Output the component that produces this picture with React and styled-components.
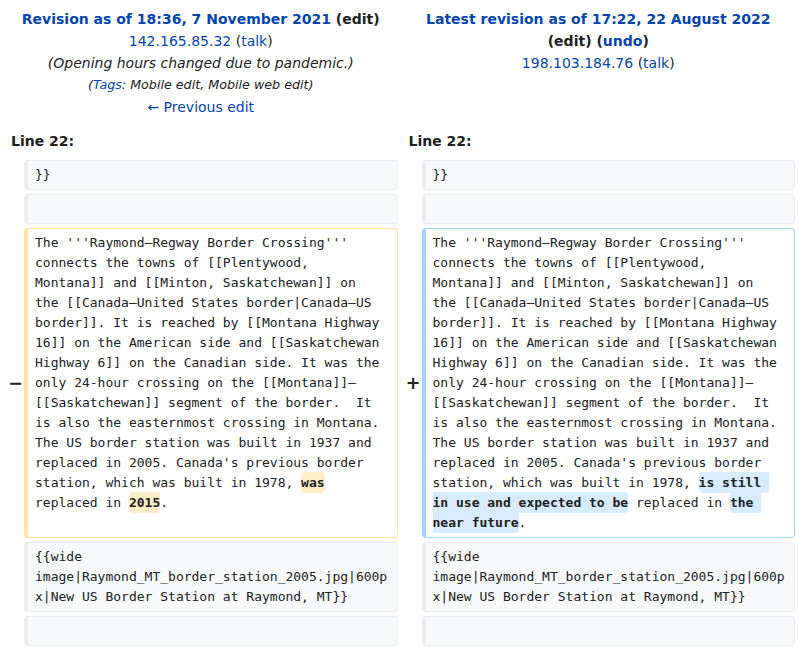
import React from 'react';
import styled, { createGlobalStyle } from 'styled-components';

const GlobalStyle = createGlobalStyle`
    body {
        margin: 0;
        background: #fff;
        color: #202122;
        font-family: "DejaVu Sans", sans-serif;
    }
`

const DiffGrid = styled.div`
    display: grid;
    grid-template-columns: 16px minmax(0, 1fr) 16px minmax(0, 1fr);
    gap: 4px;
    padding: 4px;
`

const Title = styled.div`
    grid-column: span 2;
    text-align: center;
    font-size: 14px;
    line-height: 22px;
    padding: 4px 2px;
`

const Link = styled.a`
    color: #0645ad;
    text-decoration: none;
`

const Heading = styled.strong`
    font-weight: bold;
`

const Comment = styled.div`
    font-style: italic;
`

const Tags = styled.div`
    font-style: italic;
    font-size: 12.7px;
`

const LineNo = styled.div`
    grid-column: span 2;
    font-weight: bold;
    font-size: 14px;
    line-height: 22px;
    padding: 4px 7px;
`

const Marker = styled.div`
    display: flex;
    align-items: center;
    justify-content: flex-end;
    margin-right: -3px;
    font-weight: bold;
    font-size: 17.5px;
`

const borders = {
    context: '#eaecf0',
    del: '#ffe49c',
    add: '#a3d3ff',
}

const Cell = styled.div`
    border: 1px solid ${p => borders[p.$kind]};
    border-left-width: 4px;
    border-radius: 4px;
    background: ${p => (p.$kind === 'context' ? '#f8f9fa' : '#fff')};
    padding: 4px 7px;
    font-family: "DejaVu Sans Mono", monospace;
    font-size: 13px;
    line-height: 20px;
    white-space: break-spaces;
    overflow-wrap: break-word;
    min-height: 20px;
`

const Change = styled.span`
    font-weight: bold;
    border-radius: 4px;
    padding: 0.25em 0;
    background: ${p => (p.$kind === 'add' ? '#d8ecff' : '#feeec8')};
`

const para =
    "The '''Raymond–Regway Border Crossing''' connects the towns of [[Plentywood, Montana]] and [[Minton, Saskatchewan]] on the [[Canada–United States border|Canada–US border]]. It is reached by [[Montana Highway 16]] on the American side and [[Saskatchewan Highway 6]] on the Canadian side. It was the only 24-hour crossing on the [[Montana]]–[[Saskatchewan]] segment of the border.  It is also the easternmost crossing in Montana. The US border station was built in 1937 and replaced in 2005. Canada's previous border station, which was built in 1978, "

const wide = '{{wide image|Raymond_MT_border_station_2005.jpg|600px|New US Border Station at Raymond, MT}}'

const ContextRow = ({ text }) => (
    <>
        <Marker />
        <Cell $kind="context">{text}</Cell>
        <Marker />
        <Cell $kind="context">{text}</Cell>
    </>
)

const App = () => {
    return (
        <>
            <GlobalStyle />
            <DiffGrid>
                <Title>
                    <div>
                        <Heading>
                            <Link>Revision as of 18:36, 7 November 2021</Link> (edit)
                        </Heading>
                    </div>
                    <div>
                        <Link>142.165.85.32</Link> (<Link>talk</Link>)
                    </div>
                    <Comment>(Opening hours changed due to pandemic.)</Comment>
                    <Tags>
                        (<Link>Tags</Link>: Mobile edit, Mobile web edit)
                    </Tags>
                    <div>
                        <Link>← Previous edit</Link>
                    </div>
                </Title>
                <Title>
                    <div>
                        <Heading>
                            <Link>Latest revision as of 17:22, 22 August 2022</Link> (edit) (<Link>undo</Link>)
                        </Heading>
                    </div>
                    <div>
                        <Link>198.103.184.76</Link> (<Link>talk</Link>)
                    </div>
                </Title>

                <LineNo>Line 22:</LineNo>
                <LineNo>Line 22:</LineNo>

                <ContextRow text="}}" />
                <ContextRow text="" />

                <Marker>−</Marker>
                <Cell $kind="del">
                    {para}
                    <Change $kind="del">was</Change>
                    {' replaced in '}
                    <Change $kind="del">2015</Change>.
                </Cell>
                <Marker>+</Marker>
                <Cell $kind="add">
                    {para}
                    <Change $kind="add">is still in use and expected to be</Change>
                    {' replaced in '}
                    <Change $kind="add">the near future</Change>.
                </Cell>

                <ContextRow text={wide} />
                <ContextRow text="" />
            </DiffGrid>
        </>
    )
}

export default App
